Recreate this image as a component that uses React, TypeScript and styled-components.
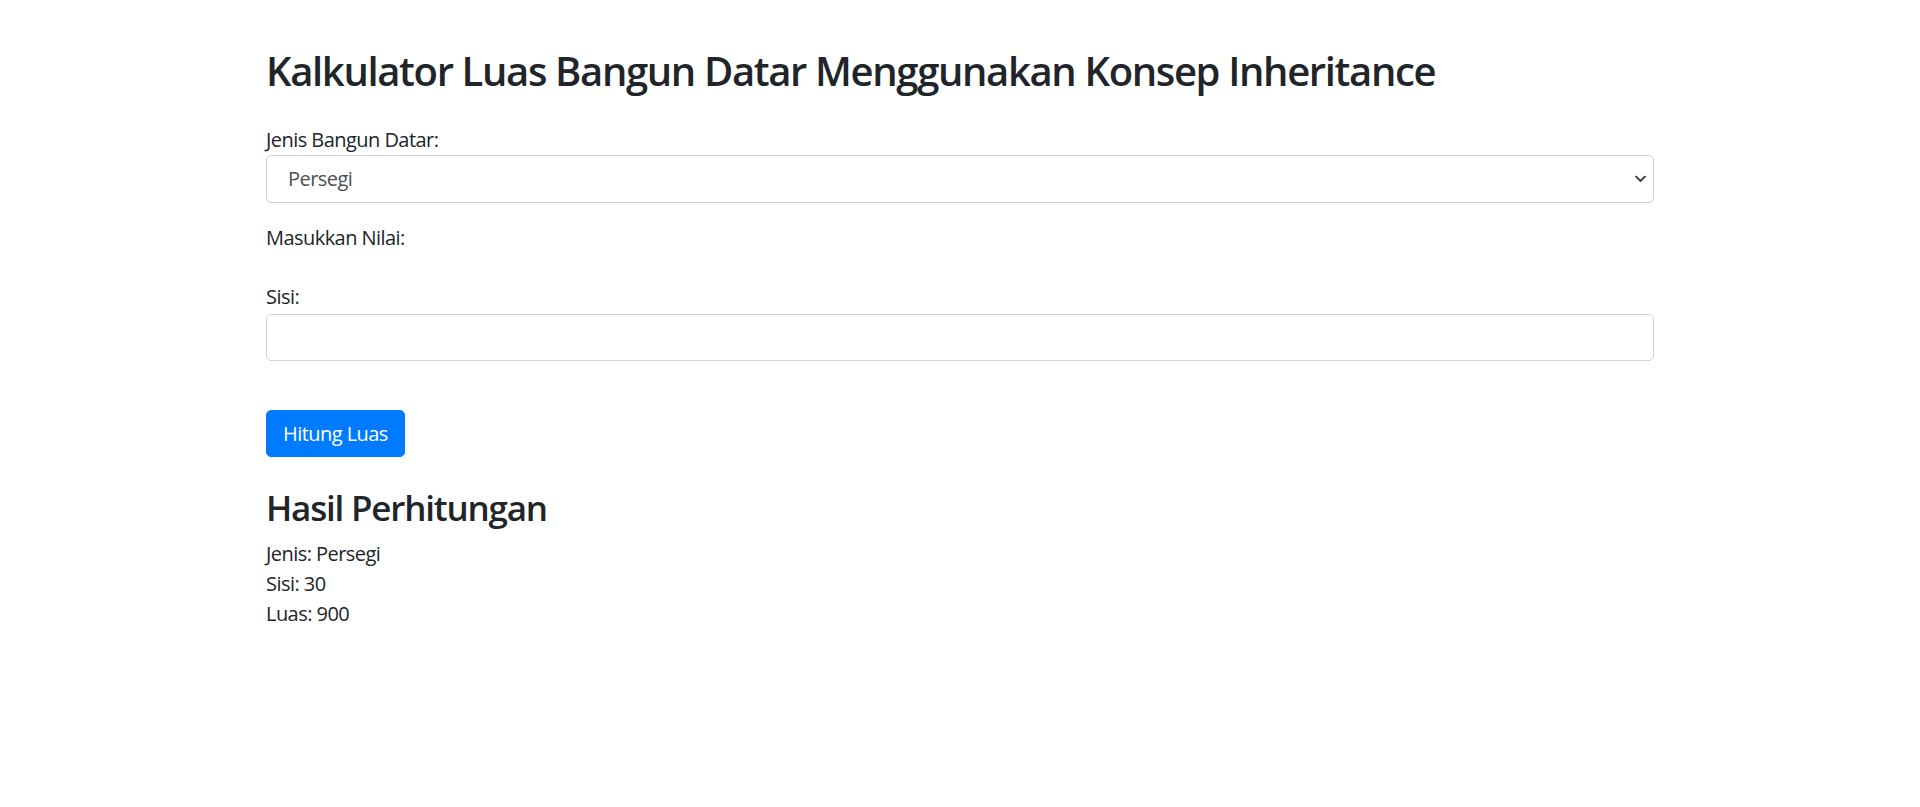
import React from "react";
import styled, { createGlobalStyle } from "styled-components";

const GlobalStyle = createGlobalStyle`
  html, body {
    margin: 0;
    padding: 0;
    background: #ffffff;
  }
  body {
    font-family: "Open Sans", "Noto Sans", "Liberation Sans", sans-serif;
    font-size: 20px;
    line-height: 30px;
    color: #212529;
    letter-spacing: -0.55px;
  }
  * { box-sizing: border-box; }
`;

const Container = styled.div`
  width: 1388px;
  margin: 0 auto;
  padding-top: 47px;
`;

const Title = styled.h2`
  margin: 0 0 30px;
  font-size: 40px;
  line-height: 48px;
  font-weight: 600;
  letter-spacing: -1.35px;
  color: #212529;
`;

const FormGroup = styled.div<{ $mb?: number }>`
  margin-bottom: ${(p) => (p.$mb ?? 20)}px;
`;

const Label = styled.label<{ $mb?: number }>`
  display: block;
  font-size: 20px;
  line-height: 30px;
  margin-bottom: ${(p) => (p.$mb ?? 0)}px;
`;

const SelectWrap = styled.div`
  position: relative;
`;

const Select = styled.select`
  display: block;
  width: 100%;
  height: 47.5px;
  padding: 0 30px 0 21px;
  font-family: inherit;
  font-size: 20px;
  letter-spacing: -0.55px;
  color: #495057;
  background: #fff;
  border: 1px solid #ced4da;
  border-radius: 5px;
  appearance: none;
  -webkit-appearance: none;
  outline: none;
`;

const Chevron = styled.svg`
  position: absolute;
  right: 8px;
  top: 50%;
  transform: translateY(-50%);
  pointer-events: none;
`;

const Input = styled.input`
  display: block;
  width: 100%;
  height: 47.5px;
  margin-top: 2px;
  padding: 0 15px;
  font-family: inherit;
  font-size: 20px;
  color: #495057;
  background: #fff;
  border: 1px solid #ced4da;
  border-radius: 5px;
  outline: none;
`;

const Button = styled.button`
  display: inline-block;
  margin-top: 49px;
  height: 47px;
  padding: 0 16px;
  font-family: inherit;
  font-size: 20px;
  line-height: 30px;
  letter-spacing: -0.55px;
  color: #fff;
  background: #007bff;
  border: 1px solid #007bff;
  border-radius: 5px;
  cursor: pointer;
`;

const ResultTitle = styled.h3`
  margin: 30px 0 10px;
  font-size: 35px;
  line-height: 42px;
  font-weight: 600;
  letter-spacing: -1.2px;
  color: #212529;
`;

const ResultLine = styled.div`
  font-size: 20px;
  line-height: 30px;
`;

export default function App() {
  return (
    <>
      <GlobalStyle />
      <Container>
        <Title>Kalkulator Luas Bangun Datar Menggunakan Konsep Inheritance</Title>
        <FormGroup>
          <Label htmlFor="jenis">Jenis Bangun Datar:</Label>
          <SelectWrap>
            <Select id="jenis" defaultValue="persegi">
              <option value="persegi">Persegi</option>
              <option value="persegipanjang">Persegi Panjang</option>
              <option value="segitiga">Segitiga</option>
              <option value="lingkaran">Lingkaran</option>
            </Select>
            <Chevron width="11" height="7" viewBox="0 0 11 7">
              <path d="M1 1 L5.5 5.5 L10 1" fill="none" stroke="#3c4043" strokeWidth="1.8" strokeLinecap="round" strokeLinejoin="round" />
            </Chevron>
          </SelectWrap>
        </FormGroup>
        <Label $mb={29}>Masukkan Nilai:</Label>
        <FormGroup $mb={0}>
          <Label htmlFor="sisi">Sisi:</Label>
          <Input id="sisi" type="text" />
        </FormGroup>
        <Button type="button">Hitung Luas</Button>
        <ResultTitle>Hasil Perhitungan</ResultTitle>
        <ResultLine>Jenis: Persegi</ResultLine>
        <ResultLine>Sisi: 30</ResultLine>
        <ResultLine>Luas: 900</ResultLine>
      </Container>
    </>
  );
}
